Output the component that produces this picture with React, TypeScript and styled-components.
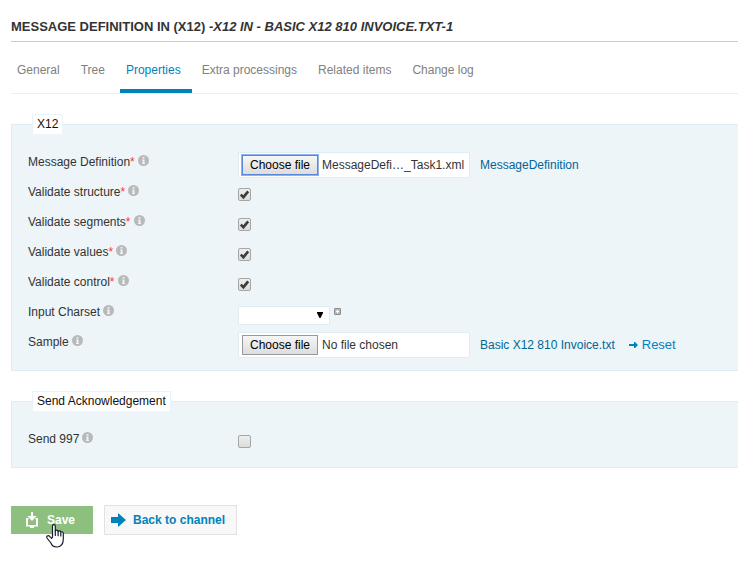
import React, { useState } from "react";
import styled, { createGlobalStyle, css } from "styled-components";

const Global = createGlobalStyle`
  *, *::before, *::after { box-sizing: border-box; }
  body {
    margin: 0;
    background: #fff;
    color: #333;
    font: 12px/20px "Liberation Sans", Arial, sans-serif;
  }
  button, input, select { font: inherit; }
`;

const Page = styled.main`
  padding: 13px 0 24px 11px;
`;

const Title = styled.h1`
  margin: 0;
  padding: 4px 0;
  border-bottom: 1px solid #ccc;
  color: #333;
  font-size: 13px;
  line-height: 20px;
  text-transform: uppercase;
`;

const TabBar = styled.nav`
  display: flex;
  gap: 4px;
  margin: 10px 0 20px;
  border-bottom: 1px solid #eee;
`;

const Tab = styled.a<{ $active?: boolean }>`
  padding: 8px 11px 9px 6px;
  border-bottom: 4px solid ${(p) => (p.$active ? "#0082bb" : "transparent")};
  color: ${(p) => (p.$active ? "#0082bb" : "#808080")};
  text-decoration: none;
  white-space: nowrap;
`;

const Group = styled.fieldset`
  min-width: 0;
  margin: 0 0 20px;
  padding: 13px 16px;
  border: 1px solid #e0edf5;
  border-right: 0;
  background: #edf5f9;
`;

const Legend = styled.legend`
  height: 20px;
  margin-left: 4px;
  padding: 0 4px;
  border: 1px solid #e9f3f9;
  border-bottom: 0;
  background: #fff;
  color: #111;
  line-height: 19px;
`;

const Row = styled.div`
  display: grid;
  grid-template-columns: 210px 1fr;
  height: 30px;
`;

const NameCell = styled.div`
  display: flex;
  align-items: flex-start;
  gap: 3px;
  padding-top: 5px;
`;

const Required = styled.span`
  color: #f33;
`;

const InfoSvg = styled.svg`
  display: block;
  width: 11px;
  height: 11px;
  margin-top: 3px;
`;

const Controls = styled.div`
  display: flex;
  align-items: flex-start;
  padding-top: 5px;
`;

const FileBox = styled.div`
  position: relative;
  display: flex;
  align-items: center;
  gap: 4px;
  flex: none;
  width: 232px;
  height: 26px;
  margin-right: 10px;
  padding: 0 3px;
  border: 1px solid #e0edf5;
  background: #fff;
`;

const FileInput = styled.input`
  position: absolute;
  inset: 0;
  width: 100%;
  height: 100%;
  opacity: 0;
`;

const FileButton = styled.span<{ $focused?: boolean }>`
  flex: none;
  width: 76px;
  height: 20px;
  border: 1px solid #999;
  background: linear-gradient(#f6f6f6, #ddd);
  color: #000;
  line-height: 18px;
  text-align: center;
  ${(p) =>
    p.$focused &&
    css`
      border-color: #5b87d8;
      box-shadow: 0 0 0 1px #8fb2ee;
    `}
`;

const FileName = styled.span`
  white-space: nowrap;
`;

const Link = styled.a<{ $large?: boolean }>`
  display: inline-flex;
  align-items: center;
  gap: 4px;
  height: 26px;
  color: ${(p) => (p.$large ? "#0082bb" : "#006596")};
  font-size: ${(p) => (p.$large ? 13 : 12)}px;
  text-decoration: none;
  white-space: nowrap;
  ${(p) => p.$large && "margin-left: 14px;"}
`;

const Check = styled.span`
  display: grid;
  width: 13px;
  height: 13px;
  margin-top: 6px;
  > * { grid-area: 1 / 1; }
`;

const CheckInput = styled.input`
  appearance: none;
  width: 13px;
  height: 13px;
  margin: 0;
  border: 1px solid #a6a6a6;
  border-radius: 2px;
  background: linear-gradient(#eee, #dcdcdc);
  & + svg { visibility: hidden; pointer-events: none; }
  &:checked + svg { visibility: visible; }
`;

const SelectBox = styled.span`
  display: grid;
  grid-template-rows: 100%;
  align-items: center;
  justify-items: end;
  width: 92px;
  height: 19px;
  margin-top: 4px;
  > * { grid-area: 1 / 1; }
  > svg { margin-right: 7px; margin-bottom: 2px; pointer-events: none; }
`;

const Select = styled.select`
  appearance: none;
  width: 100%;
  height: 100%;
  margin: 0;
  padding: 0 20px 0 4px;
  border: 1px solid #e0edf5;
  border-radius: 0;
  background: #fff;
`;

const AddButton = styled.button`
  width: 7px;
  height: 7px;
  margin: 6px 0 0 4px;
  padding: 0;
  border: 0;
  background: none;
  line-height: 0;
`;

const Actions = styled.div`
  display: flex;
  align-items: center;
  gap: 11px;
  margin-top: 37px;
`;

const SaveButton = styled.button`
  position: relative;
  display: flex;
  align-items: center;
  gap: 9px;
  height: 28px;
  padding: 0 18px 0 15px;
  border: 0;
  background: #8dc07f;
  color: #fff;
  font-weight: bold;
`;

const BackLink = styled.a`
  display: flex;
  align-items: center;
  gap: 7px;
  height: 30px;
  padding: 0 11px 0 6px;
  border: 1px solid #e2e2e2;
  background: #f8f8f8;
  color: #0082bb;
  font-weight: bold;
  text-decoration: none;
`;

const Pointer = styled.svg`
  position: absolute;
  left: 35px;
  top: 18px;
  pointer-events: none;
`;

function Info() {
  return (
    <InfoSvg viewBox="0 0 11 11" role="img" aria-label="Info">
      <circle cx="5.5" cy="5.5" r="5.5" fill="#b9b9b9" />
      <path d="M4.6 2h1.9v1.600H4.600zM4 4.400h2.500V8H7v1H4V8h.6V5.300H4z" fill="#edf5f9" />
    </InfoSvg>
  );
}

type FieldProps = { id: string; label: string; required?: boolean; children: React.ReactNode };

function Field({ id, label, required, children }: FieldProps) {
  return (
    <Row>
      <NameCell>
        <label htmlFor={id}>
          {label}
          {required && <Required>*</Required>}
        </label>
        <Info />
      </NameCell>
      <Controls>{children}</Controls>
    </Row>
  );
}

function FileField({ id, initial, focused }: { id: string; initial: string; focused?: boolean }) {
  const [name, setName] = useState(initial);
  return (
    <FileBox>
      <FileButton $focused={focused}>Choose file</FileButton>
      <FileName>{name}</FileName>
      <FileInput
        id={id}
        type="file"
        onChange={(e) => setName(e.target.files?.[0]?.name ?? "No file chosen")}
      />
    </FileBox>
  );
}

function CheckField({ id, checked }: { id: string; checked?: boolean }) {
  return (
    <Check>
      <CheckInput id={id} type="checkbox" defaultChecked={checked} />
      <svg width="13" height="13" viewBox="0 0 13 13" aria-hidden="true">
        <path d="M2.8 6.6l2.6 2.6 4.8-5.8" fill="none" stroke="#3c3c3c" strokeWidth="2.6" />
      </svg>
    </Check>
  );
}

const tabs = ["General", "Tree", "Properties", "Extra processings", "Related items", "Change log"];

const checks = [
  ["structure", "Validate structure"],
  ["segments", "Validate segments"],
  ["values", "Validate values"],
  ["control", "Validate control"],
];

export default function App() {
  return (
    <>
      <Global />
      <Page>
        <Title>
          Message definition in (X12) -<em>X12 IN - Basic X12 810 Invoice.txt-1</em>
        </Title>
        <TabBar>
          {tabs.map((t) => (
            <Tab key={t} href="#" $active={t === "Properties"}>
              {t}
            </Tab>
          ))}
        </TabBar>

        <Group>
          <Legend>X12</Legend>
          <Field id="definition" label="Message Definition" required>
            <FileField id="definition" initial="MessageDefi…_Task1.xml" focused />
            <Link href="#">MessageDefinition</Link>
          </Field>
          {checks.map(([id, label]) => (
            <Field key={id} id={id} label={label} required>
              <CheckField id={id} checked />
            </Field>
          ))}
          <Field id="charset" label="Input Charset">
            <SelectBox>
              <Select id="charset">
                <option value="" />
                <option>UTF-8</option>
              </Select>
              <svg width="6" height="6" viewBox="0 0 6 6" aria-hidden="true">
                <path d="M0 0h6v1L3.5 6h-1L0 1z" fill="#000" />
              </svg>
            </SelectBox>
            <AddButton type="button" aria-label="Add charset">
              <svg width="7" height="7" viewBox="0 0 7 7">
                <rect x=".5" y=".5" width="6" height="6" rx=".5" fill="#bbb" stroke="#8c8c8c" />
                <path d="M3 2h1v1h1v1H4v1H3V4H2V3h1z" fill="#fff" />
              </svg>
            </AddButton>
          </Field>
          <Field id="sample" label="Sample">
            <FileField id="sample" initial="No file chosen" />
            <Link href="#">Basic X12 810 Invoice.txt</Link>
            <Link href="#" $large>
              <svg width="9" height="6" viewBox="0 0 9 6" aria-hidden="true">
                <path d="M0 2h5V0h1l3 3-3 3H5V4H0z" fill="#0082bb" />
              </svg>
              Reset
            </Link>
          </Field>
        </Group>

        <Group>
          <Legend>Send Acknowledgement</Legend>
          <Field id="send997" label="Send 997">
            <CheckField id="send997" />
          </Field>
        </Group>

        <Actions>
          <SaveButton type="button">
            <svg width="12" height="16" viewBox="0 0 12 16" aria-hidden="true">
              <path d="M5 0h2v4h3.500L6 9 1.500 4H5z" fill="#fff" />
              <path d="M0 6h2.500v1.500H2V13h8V7.500h-.5V6H12v8.500H8V16H4v-1.500H0z" fill="#fff" />
            </svg>
            Save
            <Pointer width="24" height="24" viewBox="0 0 24 24" aria-hidden="true">
              <path
                d="M6.5 13V2.2c0-2.2 2.8-2.2 2.8 0v4.6c.6-1 2.6-.8 2.8.5.7-.8 2.5-.5 2.7.7 1-.6 2.5 0 2.5 1.400v5.400c0 5-2.500 8.200-6.500 8.200-4 0-5-2-6.300-4.500L1 14c-1.100-1.700 1-3 2.600-1.700l2 2z"
                fill="#fff"
                stroke="#1b1b2b"
                strokeWidth="1.200"
                strokeLinejoin="round"
              />
              <path d="M9.300 6.800v4.700M12.100 7.400v4.300M14.800 8.300v3.600" stroke="#1b1b2b" strokeWidth="1.200" strokeLinecap="round" />
            </Pointer>
          </SaveButton>
          <BackLink href="#">
            <svg width="15" height="14" viewBox="0 0 15 14" aria-hidden="true">
              <path d="M0 4h7V0l8 7-8 7v-4H0z" fill="#0082bb" />
            </svg>
            Back to channel
          </BackLink>
        </Actions>
      </Page>
    </>
  );
}
